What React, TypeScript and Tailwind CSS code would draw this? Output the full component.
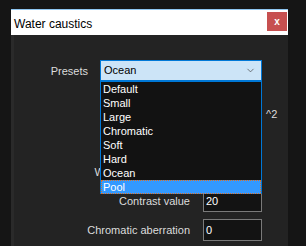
import { ChevronDown } from "lucide-react";

const presets = ["Default", "Small", "Large", "Chromatic", "Soft", "Hard", "Ocean", "Pool"];

const font = { fontFamily: "'Liberation Sans', Arial, sans-serif" };

function Field({ label, value, suffix }: { label: string; value: string; suffix?: string }) {
  return (
    <div className="flex h-[22px] items-center">
      <span className="w-[176px] whitespace-nowrap text-right text-[11px] text-[#dcdcdc]">{label}</span>
      <div className="ml-[13px] flex h-[22px] w-[59px] items-center border border-[#7a7a7a] bg-[#131313] pl-[2px] text-[11px] text-white">
        {value}
      </div>
      {suffix && <span className="ml-[4px] text-[11px] text-[#dcdcdc]">{suffix}</span>}
    </div>
  );
}

export default function App() {
  return (
    <div className="h-[246px] w-[306px] overflow-hidden bg-[#151515] pt-[9px] pl-[11px]" style={font}>
      <div className="flex h-[237px] w-[277px] flex-col">
        <div className="flex h-[26px] items-start border-t border-[#8ec5f0] bg-white">
          <span className="ml-[3px] mt-[5px] text-[12px] text-black">Water caustics</span>
          <div className="ml-auto mr-px mt-[2px] flex h-[19px] w-[20px] items-center justify-center bg-[#c75050] text-[10px] font-bold text-white">
            x
          </div>
        </div>
        <div className="relative flex-1 border-l-[3px] border-[#2a2a2a] bg-[#232323] pt-[25px]">
          <div className="flex h-[22px] items-center">
            <span className="w-[74px] text-right text-[11px] text-[#dcdcdc]">Presets</span>
            <div className="ml-[12px] flex h-[22px] w-[162px] items-center justify-between border border-b-2 border-[#0078d7] bg-[#cce4f7] pl-[3px] pr-[5px] text-[11px] text-black">
              <span>Ocean</span>
              <ChevronDown size={11} strokeWidth={1.5} className="text-[#444]" />
            </div>
          </div>
          <div className="mt-[21px] flex flex-col gap-[7px]">
            <Field label="Scale" value="1" suffix="^2" />
            <Field label="Intensity" value="1" />
            <Field label="Wave displacement" value="1" />
            <Field label="Contrast value" value="20" />
            <Field label="Chromatic aberration" value="0" />
          </div>
          <div className="absolute left-[86px] top-[47px] w-[162px] border-x border-[#0078d7] bg-[#121212]">
            {presets.map((p) =>
              p === "Pool" ? (
                <div key={p} className="flex h-[14px] items-center border border-dotted border-[#e07020] bg-[#3399ff] pl-px text-[11px] text-white">
                  {p}
                </div>
              ) : (
                <div key={p} className="flex h-[14px] items-center pl-[2px] text-[11px] text-white">
                  {p}
                </div>
              )
            )}
          </div>
        </div>
      </div>
    </div>
  );
}
